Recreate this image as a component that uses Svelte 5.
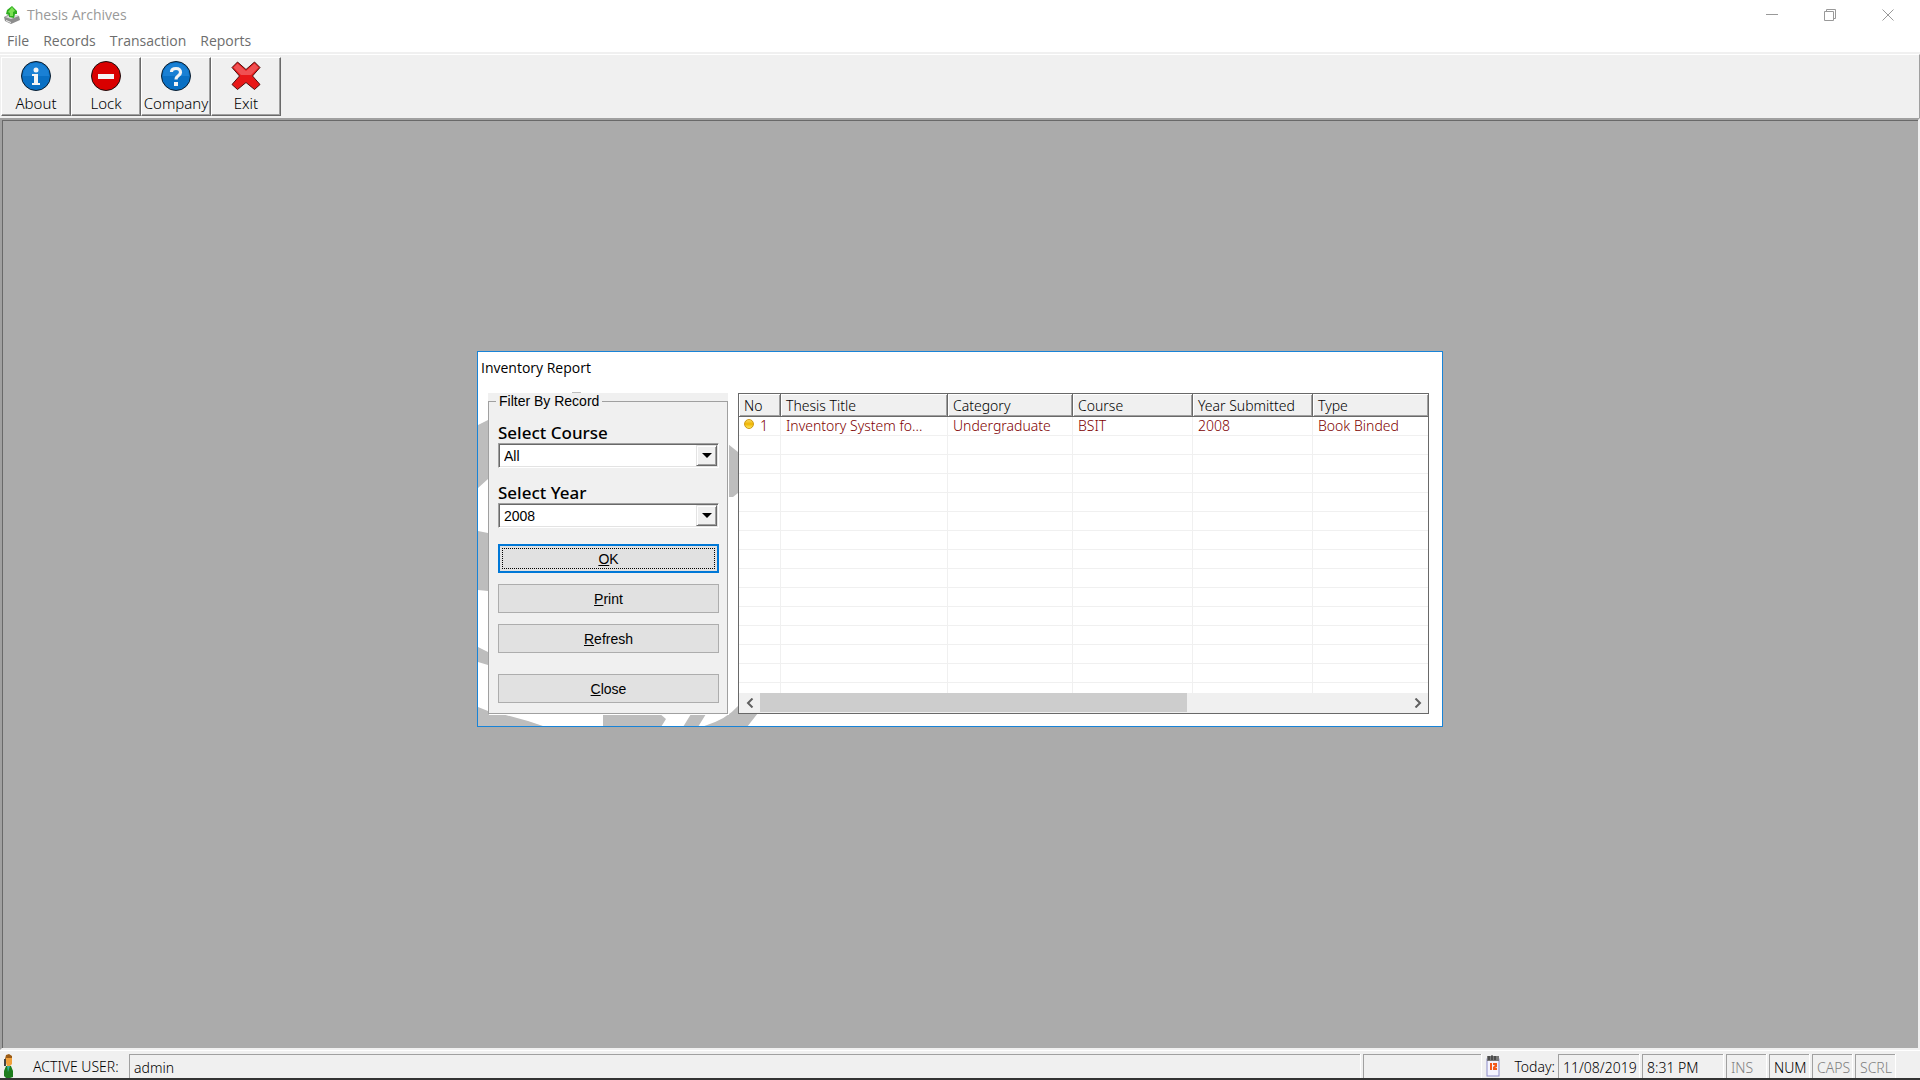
<script lang="ts">
  const menus = ['File', 'Records', 'Transaction', 'Reports'];
  const tools = ['About', 'Lock', 'Company', 'Exit'];

  const columns = ['No', 'Thesis Title', 'Category', 'Course', 'Year Submitted', 'Type'];
  const records = [
    ['1', 'Inventory System fo...', 'Undergraduate', 'BSIT', '2008', 'Book Binded'],
  ];
  const emptyRows = Array.from({ length: 14 });

  const keys = [
    { name: 'INS', on: false },
    { name: 'NUM', on: true },
    { name: 'CAPS', on: false },
    { name: 'SCRL', on: false },
  ];

  let course = 'All';
  let year = '2008';
</script>

<div class="app">
  <header class="titlebar">
    <svg class="app-icon" width="16" height="18" viewBox="0 0 16 18">
      <path d="M0 11 L6 8 L15 10 L16 14 L7 18 L1 15Z" fill="#8d8d8d" />
      <path d="M1 11 L7 13 L15 10 L10 8Z" fill="#d9d9d9" />
      <path d="M2 14 L7 16 L7 17 L2 15Z" fill="#eeeeee" />
      <path d="M8 0 L13 5 L13 8 L11 8 L10 12 L5 11 L5 9 L2 8 L3 4Z" fill="#2fae20" />
      <path d="M8 1 L11 5 L9 6 L9 10 L6 10 L6 7 L4 6Z" fill="#7be052" />
    </svg>
    <h1>Thesis Archives</h1>
    <div class="window-buttons">
      <button type="button" aria-label="Minimize">
        <svg width="12" height="12"><path d="M0 5.5H12" /></svg>
      </button>
      <button type="button" aria-label="Restore">
        <svg width="12" height="12"><path d="M.5 2.5H9.500V11.500H.5ZM2.500 2.500V.5H11.500V9.500H9.500" /></svg>
      </button>
      <button type="button" aria-label="Close window">
        <svg width="12" height="12"><path d="M.5 .5L11.500 11.500M11.500 .5L.5 11.500" /></svg>
      </button>
    </div>
  </header>

  <nav class="menubar">
    {#each menus as menu}
      <button type="button">{menu}</button>
    {/each}
  </nav>

  <div class="toolbar">
    {#each tools as tool}
      <button type="button">
        <svg width="32" height="32" viewBox="0 0 32 32">
          {#if tool === 'Exit'}
            <path d="M7.500 2L16 9.500L24.500 2L30 7.500L22.500 16L30 24.500L24.500 29.500L16 22.500L7.500 29.500L2 24.500L9.500 16L2 7.500Z" fill="#e81818" stroke="#4a1010" stroke-linejoin="round" />
            <path d="M7.500 3.500L16 11L24.500 3.500L28.500 7.500L21 15H11L3.500 7.500Z" fill="#f05052" />
          {:else if tool === 'Lock'}
            <circle cx="16" cy="16" r="14.500" fill="#d90000" stroke="#1c0c0c" />
            <rect x="8" y="14" width="16" height="5" fill="#f4f4f4" />
          {:else}
            <circle cx="16" cy="16" r="14.500" fill="#0a70c4" stroke="#0b1c2c" />
            <path d="M3 16A13 13 0 0 1 29 16Z" fill="#1a80d4" />
            {#if tool === 'About'}
              <circle cx="16" cy="10" r="2.500" fill="#f4f4f4" />
              <path d="M12 14H18V23H20V25H12V23H14V16H12Z" fill="#f4f4f4" />
            {:else}
              <path d="M11.500 12Q11.500 8.500 16 8.500T20.500 12.500Q20.500 14.500 18 16Q16 17.300 16 19.500" fill="none" stroke="#f4f4f4" stroke-width="3.200" />
              <rect x="14" y="22" width="4" height="4" fill="#f4f4f4" />
            {/if}
          {/if}
        </svg>
        <span>{tool}</span>
      </button>
    {/each}
  </div>

  <main class="workspace">
    <section class="dialog" aria-labelledby="dialog-title">
      <svg class="watermark" width="964" height="375" viewBox="0 0 964 375" fill="#bdbdbd">
        <path d="M0 73L10 68V127L0 136ZM0 179L10 181V239L0 238ZM0 295L10 300V313L0 310Z" />
        <path d="M94 40H103V42H94ZM250 92L260 100V141L255 145H250Z" />
        <path d="M0 355L10 359L24 362L50 369L68 375H0ZM125 361H181L188 367L183 375H125Z" />
        <path d="M213 362H228L220 375H205ZM223 375Q248 368 260 354L280 361L269 375Z" />
      </svg>
      <h2 id="dialog-title">Inventory Report</h2>

      <div class="dialog-body">
        <form class="filter" on:submit|preventDefault>
          <fieldset>
            <legend>Filter By Record</legend>
            <label for="course">Select Course</label>
            <div class="combo">
              <select id="course" bind:value={course}>
                <option>All</option>
                <option>BSIT</option>
              </select>
              <span class="drop"></span>
            </div>
            <label for="year">Select Year</label>
            <div class="combo">
              <select id="year" bind:value={year}>
                <option>2008</option>
              </select>
              <span class="drop"></span>
            </div>
            <div class="actions">
              <button type="submit" class="default"><u>O</u>K</button>
              <button type="button"><u>P</u>rint</button>
              <button type="button"><u>R</u>efresh</button>
              <button type="button" class="close"><u>C</u>lose</button>
            </div>
          </fieldset>
        </form>

        <div class="list">
          <div class="rows">
            <table>
              <colgroup>
                <col class="no" />
                <col class="title" />
                <col class="category" />
                <col class="course" />
                <col class="year" />
                <col />
              </colgroup>
              <thead>
                <tr>
                  {#each columns as column}
                    <th>{column}</th>
                  {/each}
                </tr>
              </thead>
              <tbody>
                {#each records as record}
                  <tr>
                    {#each record as value, i}
                      <td>{#if i === 0}<i class="dot"></i>{/if}{value}</td>
                    {/each}
                  </tr>
                {/each}
                {#each emptyRows as _}
                  <tr>
                    {#each columns as _}
                      <td></td>
                    {/each}
                  </tr>
                {/each}
              </tbody>
            </table>
          </div>
          <div class="scrollbar">
            <button type="button" aria-label="Scroll left">
              <svg width="8" height="10"><path d="M6.500 .5L2 5L6.500 9.500" /></svg>
            </button>
            <div class="track"><div class="thumb"></div></div>
            <button type="button" aria-label="Scroll right">
              <svg width="8" height="10"><path d="M1.500 .5L6 5L1.500 9.500" /></svg>
            </button>
          </div>
        </div>
      </div>
    </section>
  </main>

  <footer class="statusbar">
    <svg class="user-icon" width="12" height="24" viewBox="0 0 12 24">
      <path d="M2 5L3 1L6 0L9 2V7H2Z" fill="#9a5a14" />
      <path d="M3 4H9V10L7 12H4L3 9Z" fill="#f0a03c" />
      <path d="M1 5H3V12H1Z" fill="#444444" />
      <path d="M3 12H8L10 17V23L7 24H3L1 22V17Z" fill="#1c7c1c" />
      <path d="M4 12H7L5 18Z" fill="#39b0a0" />
    </svg>
    <span class="label user">ACTIVE USER:</span>
    <span class="panel name">admin</span>
    <span class="panel blank"></span>
    <svg class="date-icon" width="14" height="22" viewBox="0 0 14 22">
      <rect x="1" y="4" width="12" height="17" fill="#f4f4ff" stroke="#8c8cc8" />
      <rect x="1" y="1" width="12" height="5" fill="#777777" />
      <path d="M3 1V5M6 0V5M9 1V5" stroke="#222222" />
      <path d="M4 8H6V15H4ZM7 8H11V12L9 13H11V15H7V12L9 10H7Z" fill="#f45a1c" />
    </svg>
    <span class="label">Today:</span>
    <span class="panel date">11/08/2019</span>
    <span class="panel time">8:31 PM</span>
    {#each keys as key}
      <span class="panel key" class:on={key.on}>{key.name}</span>
    {/each}
  </footer>
</div>

<style>
  :global(body) {
    margin: 0;
  }

  .app {
    display: flex;
    flex-direction: column;
    min-height: 100vh;
    background: #fff;
    color: #000;
    font-family: "Noto Sans", Tahoma, sans-serif;
    font-size: 14px;
    font-weight: 300;
  }

  .app *,
  .app {
    box-sizing: border-box;
  }

  button {
    font: inherit;
    color: inherit;
    padding: 0;
    margin: 0;
    border: none;
    background: none;
  }

  .titlebar {
    display: flex;
    align-items: center;
    height: 29px;
    padding-left: 4px;
  }

  h1 {
    flex: 1;
    margin: 0 0 0 7px;
    font-family: "Open Sans", "Segoe UI", sans-serif;
    font-size: 14px;
    font-weight: 400;
    color: #999;
  }

  .window-buttons {
    display: flex;
    height: 28px;
    margin-right: 3px;
  }

  .window-buttons button {
    display: flex;
    align-items: center;
    justify-content: center;
    width: 58px;
  }

  .window-buttons svg {
    fill: none;
    stroke: #999;
  }

  .menubar {
    display: flex;
    gap: 14px;
    height: 25px;
    padding: 0 7px;
    border-bottom: 2px solid #f0f0f0;
    font-family: "Open Sans", "Segoe UI", sans-serif;
    font-size: 14px;
    font-weight: 400;
    color: #6d6d6d;
  }

  .toolbar {
    display: flex;
    height: 64px;
    padding: 2px 1px 0;
    background: #f0f0f0;
    border-right: 1px solid #a0a0a0;
    border-top: 1px solid #fff;
  }

  .toolbar button {
    display: flex;
    flex-direction: column;
    align-items: center;
    width: 70px;
    height: 59px;
    padding-top: 2px;
    border: 1px solid;
    border-color: #fff #696969 #696969 #fff;
    box-shadow: inset -1px -1px #a0a0a0;
    line-height: 22px;
    font-size: 15px;
  }

  .toolbar svg {
    flex: none;
  }

  .workspace {
    position: relative;
    flex: 1;
    min-height: 640px;
    background: #ababab;
    border: 2px solid;
    border-color: #a0a0a0 #f0f0f0 #f0f0f0 #a0a0a0;
    box-shadow: inset 1px 1px #696969;
  }

  .dialog {
    position: absolute;
    top: 231px;
    left: calc(50% - 483px);
    width: 966px;
    background: #fff;
    border: 1px solid #1883d7;
    overflow: hidden;
  }

  .watermark {
    position: absolute;
    top: 0;
    left: 0;
  }

  h2 {
    margin: 0;
    padding: 5px 0 0 3px;
    height: 41px;
    font-family: "Open Sans", "Segoe UI", sans-serif;
    font-size: 14px;
    font-weight: 400;
    line-height: 22px;
  }

  .dialog-body {
    position: relative;
    display: flex;
    gap: 10px;
    padding: 0 13px 12px 10px;
  }

  .filter {
    width: 240px;
    background: #f0f0f0;
    font-family: "Liberation Sans", Arial, sans-serif;
  }

  fieldset {
    margin: 0;
    height: 321px;
    padding: 1px 8px 0 9px;
    border: 1px solid #a0a0a0;
    box-shadow: 1px 1px #fff;
  }

  legend {
    padding: 0 3px;
    margin-left: -2px;
    font-size: 14px;
    line-height: 16px;
  }

  label {
    display: block;
    height: 33px;
    padding-top: 13px;
    font-family: "Noto Sans", Tahoma, sans-serif;
    font-size: 17px;
    font-weight: 500;
    line-height: 20px;
  }

  .combo {
    display: grid;
    grid-template-columns: 1fr 22px;
    height: 25px;
    margin-bottom: 2px;
    background: #fff;
    border: 1px solid;
    border-color: #a0a0a0 #fff #fff #a0a0a0;
    box-shadow: inset 1px 1px #696969, inset -1px -1px #e3e3e3;
  }

  select {
    grid-area: 1 / 1 / 2 / 3;
    appearance: none;
    width: 100%;
    padding: 0 5px;
    border: none;
    background: none;
    font: inherit;
    font-size: 14px;
  }

  .drop {
    grid-area: 1 / 2;
    display: flex;
    align-items: center;
    justify-content: center;
    margin: 1px 1px 1px 0;
    background: #f0f0f0;
    border: 1px solid;
    border-color: #e3e3e3 #696969 #696969 #e3e3e3;
    box-shadow: inset 1px 1px #fff, inset -1px -1px #a0a0a0;
    pointer-events: none;
  }

  .drop::after {
    content: '';
    border: 5px solid transparent;
    border-top-color: #000;
    border-bottom: none;
  }

  .actions {
    display: flex;
    flex-direction: column;
    gap: 11px;
    padding-top: 14px;
  }

  .actions button {
    height: 29px;
    background: #e1e1e1;
    border: 1px solid #adadad;
    font-size: 14px;
  }

  .actions .default {
    border: 2px solid #0078d7;
    outline: 1px dotted #000;
    outline-offset: -5px;
  }

  .actions .close {
    margin-top: 10px;
  }

  .list {
    flex: 1;
    min-width: 0;
    height: 321px;
    display: flex;
    flex-direction: column;
    background: #fff;
    border: 1px solid #696969;
  }

  .rows {
    flex: 1;
    min-height: 0;
    overflow: hidden;
  }

  table {
    width: 100%;
    table-layout: fixed;
    border-collapse: separate;
    border-spacing: 0;
  }

  .no {
    width: 42px;
  }

  .title {
    width: 167px;
  }

  .category {
    width: 125px;
  }

  .course,
  .year {
    width: 120px;
  }

  th {
    height: 23px;
    padding: 1px 4px 0 5px;
    background: #f0f0f0;
    border-right: 1px solid #696969;
    border-bottom: 1px solid #696969;
    box-shadow: inset 1px 1px #fff, inset -1px -1px #a0a0a0;
    font-weight: 300;
    line-height: 21px;
    text-align: left;
    white-space: nowrap;
  }

  td {
    height: 19px;
    padding: 0 5px;
    border-right: 1px solid #f0f0f0;
    border-bottom: 1px solid #f0f0f0;
    color: #800000;
    line-height: 18px;
    white-space: nowrap;
  }

  th:last-child,
  td:last-child {
    border-right: none;
  }

  .dot {
    display: inline-block;
    width: 10px;
    height: 10px;
    margin-right: 6px;
    vertical-align: 2px;
    border: 1px solid #d09a10;
    border-radius: 50%;
    background: linear-gradient(#f8d860, #f0b400 50%, #fce860);
  }

  .scrollbar {
    display: flex;
    height: 20px;
    background: #f0f0f0;
  }

  .scrollbar button {
    display: flex;
    align-items: center;
    justify-content: center;
    width: 21px;
  }

  .scrollbar svg {
    fill: none;
    stroke: #606060;
    stroke-width: 2;
  }

  .track {
    flex: 1;
  }

  .thumb {
    width: 66%;
    height: 19px;
    background: #cdcdcd;
  }

  .statusbar {
    display: flex;
    height: 30px;
    padding: 3px 22px 0 3px;
    background: #f0f0f0;
    border-top: 1px solid #fff;
    border-bottom: 2px solid #333;
    line-height: 25px;
  }

  .label {
    white-space: nowrap;
  }

  .user {
    width: 96px;
    margin-left: 18px;
  }

  .panel {
    margin-right: 3px;
    padding-left: 4px;
    border-top: 1px solid #a0a0a0;
    border-left: 1px solid #a0a0a0;
    box-shadow: 1px 0 #fff;
    white-space: nowrap;
  }

  .name {
    flex: 1;
  }

  .blank {
    width: 118px;
  }

  .date-icon {
    margin: 1px 14px 0 2px;
  }

  .date {
    width: 81px;
    margin-left: 3px;
  }

  .time {
    width: 81px;
  }

  .key {
    width: 40px;
    color: #808080;
  }

  .key.on {
    color: #000;
  }
</style>
